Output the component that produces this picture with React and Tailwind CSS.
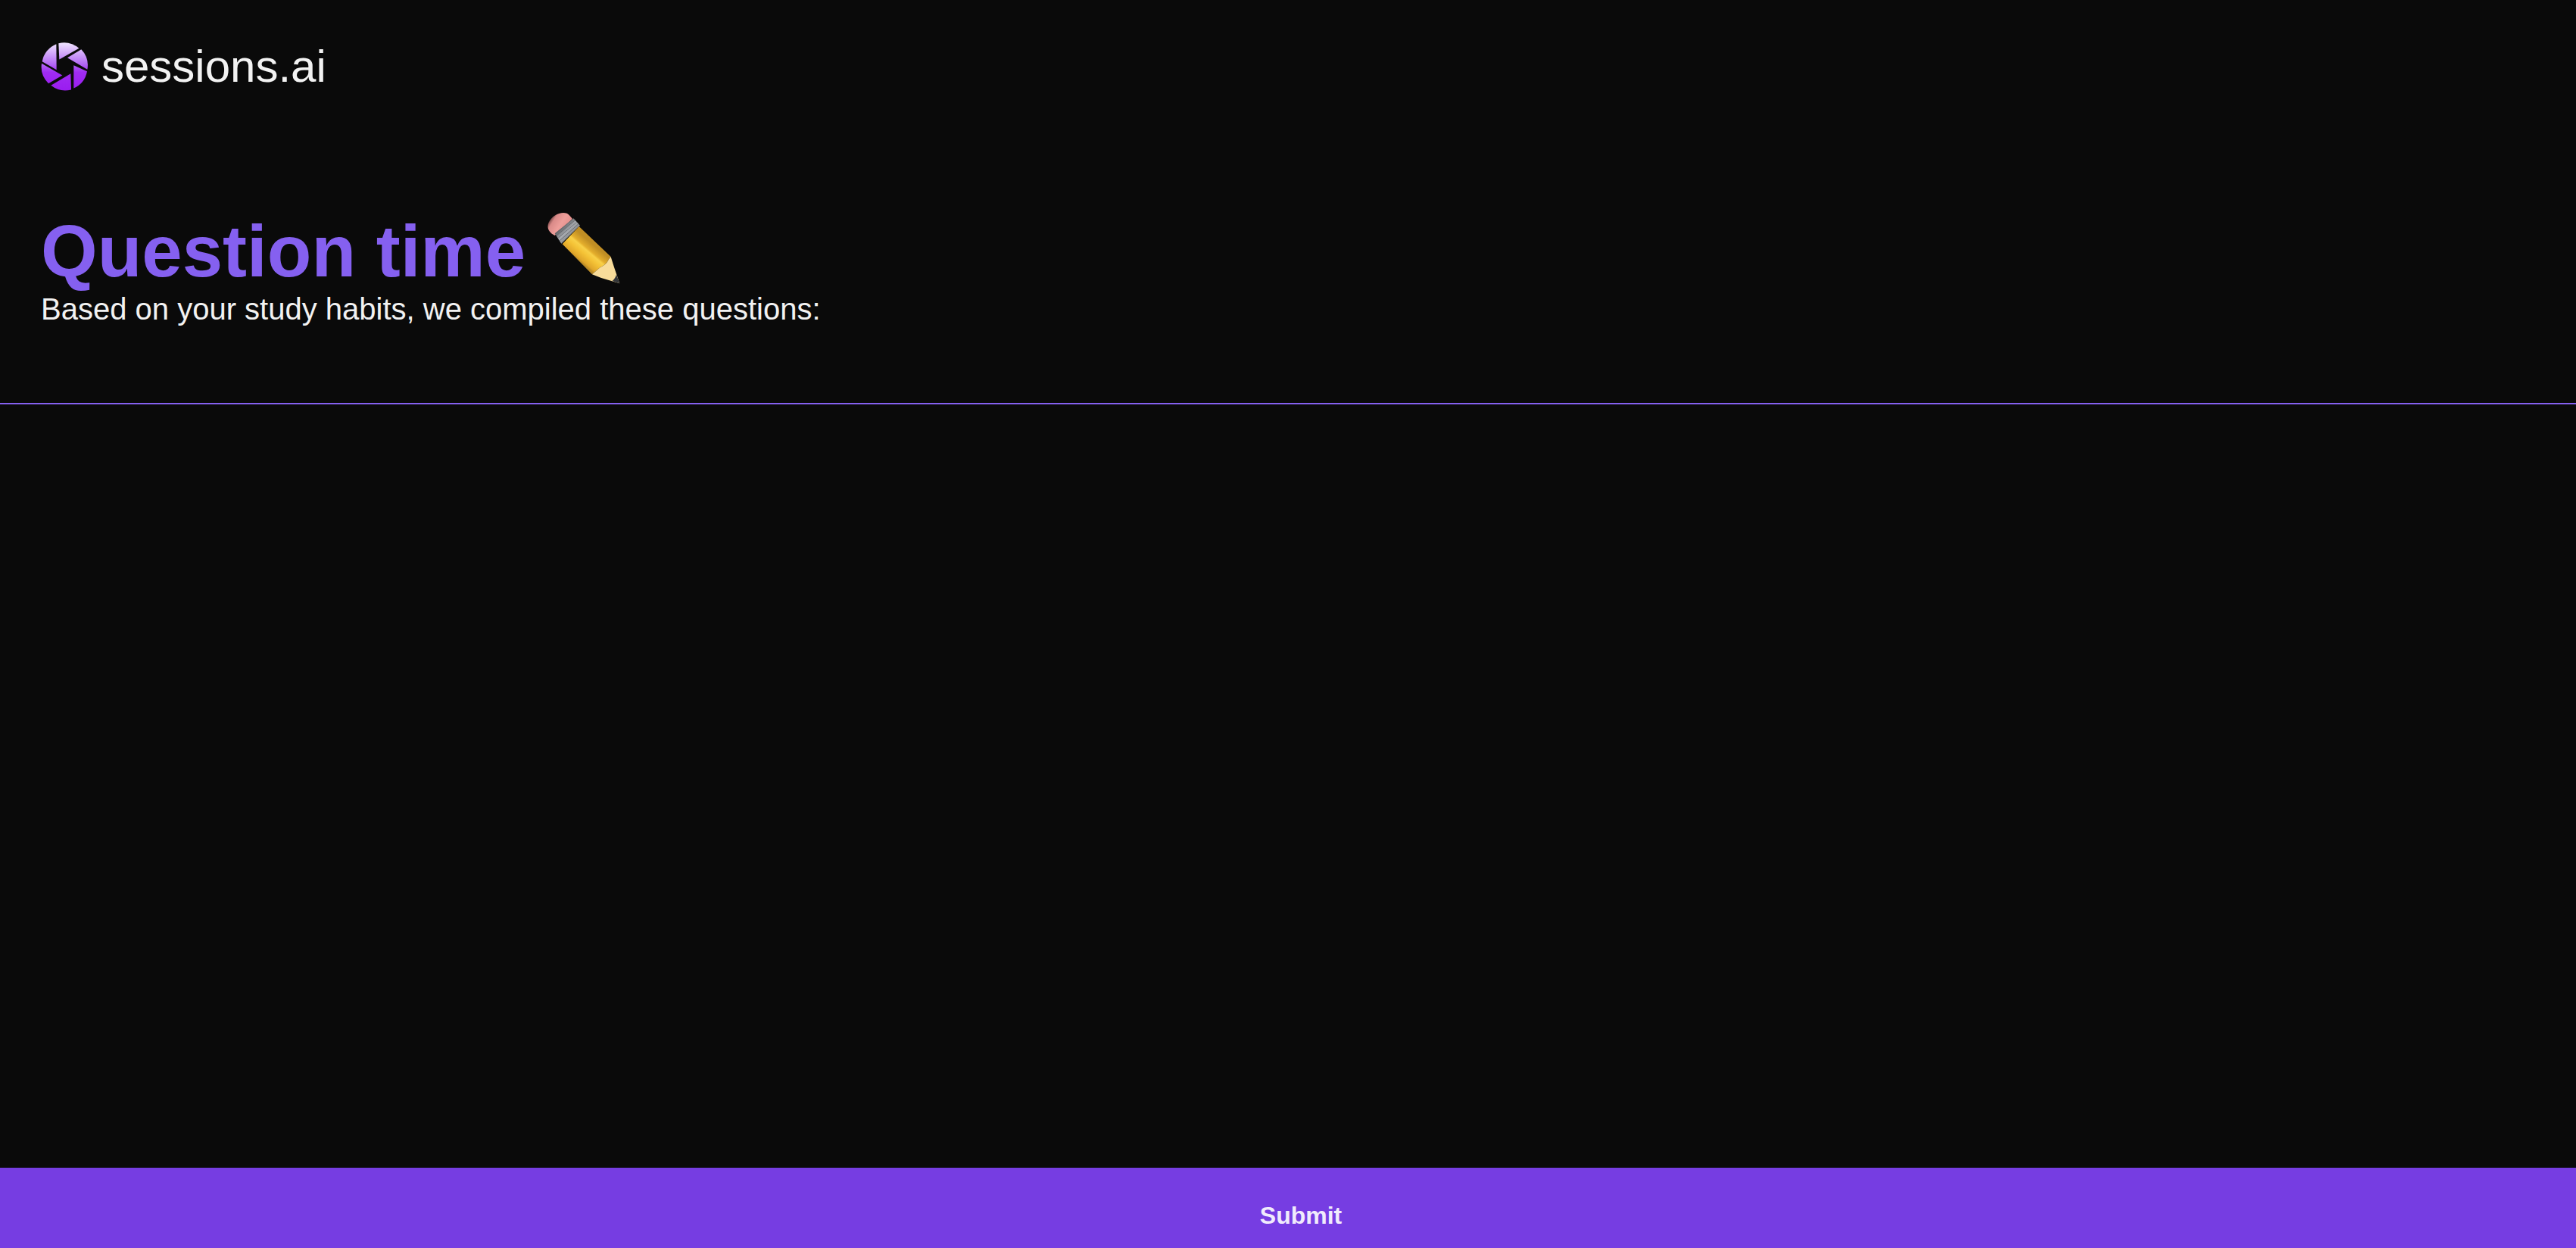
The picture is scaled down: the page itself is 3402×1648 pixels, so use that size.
import React from 'react';

const Logo = () => (
    <svg width="62" height="66" viewBox="45 33 186 195" className="shrink-0">
        <defs>
            <linearGradient id="blade" gradientUnits="userSpaceOnUse" x1="0" y1="35" x2="0" y2="225">
                <stop offset="0" stopColor="#f0e6ff" />
                <stop offset="0.45" stopColor="#b368f5" />
                <stop offset="0.62" stopColor="#a02cf2" />
                <stop offset="1" stopColor="#9a1cf0" />
            </linearGradient>
        </defs>
        <g fill="url(#blade)">
            <path d="M115 38 A92 92 0 0 1 196 58 L118 102 Z" />
            <path d="M150 95 L205 62 A92 92 0 0 1 229 142 Z" />
            <path d="M175 125 L228 149 A92 92 0 0 1 175 216 Z" />
            <path d="M163 158 L165 222 A92 92 0 0 1 85 205 Z" />
            <path d="M48 118 L130 165 L75 197 A92 92 0 0 1 48 118 Z" />
            <path d="M106 41 L107 143 L50 110 A92 92 0 0 1 106 41 Z" />
        </g>
    </svg>
);

const Pencil = () => (
    <svg width="98" height="96" viewBox="125 65 292 288" className="shrink-0">
        <defs>
            <linearGradient id="body" gradientUnits="userSpaceOnUse" x1="280" y1="170" x2="225" y2="235">
                <stop offset="0" stopColor="#c08e24" />
                <stop offset="0.3" stopColor="#e4ae2c" />
                <stop offset="0.4" stopColor="#f8d048" />
                <stop offset="0.6" stopColor="#f4c236" />
                <stop offset="0.9" stopColor="#e0a62a" />
                <stop offset="1" stopColor="#b98a26" />
            </linearGradient>
            <linearGradient id="eraser" gradientUnits="userSpaceOnUse" x1="138" y1="95" x2="200" y2="135">
                <stop offset="0" stopColor="#7d4a4a" />
                <stop offset="0.18" stopColor="#d98a88" />
                <stop offset="0.6" stopColor="#ee9e9a" />
                <stop offset="1" stopColor="#e58f8c" />
            </linearGradient>
            <linearGradient id="band" gradientUnits="userSpaceOnUse" x1="175" y1="125" x2="225" y2="175">
                <stop offset="0" stopColor="#4c4f53" />
                <stop offset="0.45" stopColor="#a9acb1" />
                <stop offset="0.7" stopColor="#8e9196" />
                <stop offset="1" stopColor="#5f6266" />
            </linearGradient>
        </defs>
        <path d="M156 158 C134 148 122 128 132 106 C146 78 178 62 204 70 C212 74 218 82 226 92 Z" fill="url(#eraser)" />
        <path d="M156 150 L230 90 L256 118 L182 190 Z" fill="url(#band)" />
        <g stroke="#55585c" strokeWidth="2" fill="none">
            <path d="M163 158 L236 97" />
            <path d="M170 167 L243 105" />
            <path d="M176 178 L250 112" />
        </g>
        <path d="M186 192 L252 122 L378 242 L370 252 C362 270 350 278 336 284 L304 312 Z" fill="url(#body)" />
        <path d="M304 312 L336 284 C350 278 362 270 370 252 L378 242 L392 286 L413 348 L340 326 Z" fill="#f8dc9a" />
        <path d="M384 338 C392 332 398 322 400 312 L413 348 Z" fill="#33363a" />
    </svg>
);

const App = () => {
    return (
        <div className="h-screen flex flex-col bg-[#0a0a0a] text-white font-['Liberation_Sans',Arial,sans-serif] overflow-hidden">
            <div className="h-[532px] shrink-0 px-[54px] pt-[54px]">
                <div className="flex items-center gap-[18px]">
                    <Logo />
                    <span className="text-[60px] leading-[68px] text-[#f2f2f2]">sessions.ai</span>
                </div>
                <div className="flex items-center mt-[155px] h-[110px]">
                    <h1 className="text-[96px] leading-[110px] font-bold text-[#8560f0]">Question time</h1>
                    <div className="ml-[28px] -mt-[8px]">
                        <Pencil />
                    </div>
                </div>
                <p className="text-[40px] leading-[46px] text-[#f2f2f2] -mt-[2px]">Based on your study habits, we compiled these questions:</p>
            </div>
            <div className="h-[2px] shrink-0 bg-[#8560f0]" />
            <div className="flex-1" />
            <button className="h-[106px] shrink-0 bg-[#763de2] pl-[34px] pt-[20px] text-[32px] font-bold text-[#f0ebfc]">Submit</button>
        </div>
    );
};

export default App;
